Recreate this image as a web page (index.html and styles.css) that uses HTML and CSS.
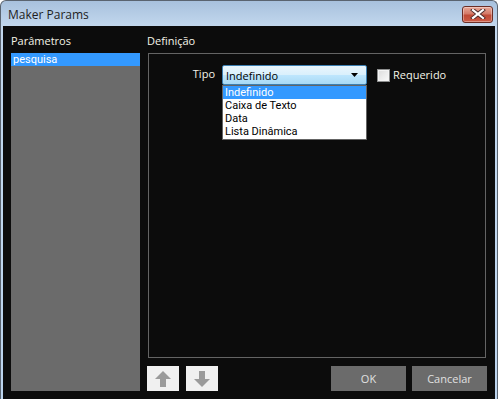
FILE: index.html
```html
<!DOCTYPE html>
<html>
<head>
<meta charset="utf-8">
<link rel="stylesheet" href="styles.css">
</head>
<body>
<div class="window">
  <div class="titlebar">
    <span class="title">Maker Params</span>
    <div class="close">
      <svg width="16" height="10" viewBox="0 0 16 10"><path d="M3 1 L13 9 M13 1 L3 9" stroke="#4a2a2a" stroke-width="4" stroke-linecap="square"/><path d="M3 1 L13 9 M13 1 L3 9" stroke="#fff" stroke-width="2.2" stroke-linecap="square"/></svg>
    </div>
  </div>
  <div class="client">
    <div class="left">
      <div class="label">Parâmetros</div>
      <div class="list">
        <div class="item selected">pesquisa</div>
      </div>
    </div>
    <div class="right">
      <div class="label">Definição</div>
      <div class="group">
        <div class="row">
          <div class="tipo">Tipo</div>
          <div class="combo-wrap">
            <div class="combo">
              <span>Indefinido</span>
              <svg class="arrow" width="7" height="4" viewBox="0 0 7 4"><path d="M0 0 H7 L3.5 4 Z" fill="#000"/></svg>
            </div>
            <div class="dropdown">
              <div class="opt active">Indefinido</div>
              <div class="opt">Caixa de Texto</div>
              <div class="opt">Data</div>
              <div class="opt">Lista Dinâmica</div>
            </div>
          </div>
          <div class="check"></div>
          <div class="req">Requerido</div>
        </div>
      </div>
      <div class="buttons">
        <div class="arrowbtn">
          <svg width="18" height="18" viewBox="0 0 18 18"><path d="M9 1 L17 9 H12 V17 H6 V9 H1 Z" fill="#9a9a9a"/></svg>
        </div>
        <div class="arrowbtn">
          <svg width="18" height="18" viewBox="0 0 18 18"><path d="M9 17 L17 9 H12 V1 H6 V9 H1 Z" fill="#9a9a9a"/></svg>
        </div>
        <div class="spacer"></div>
        <div class="btn">OK</div>
        <div class="btn">Cancelar</div>
      </div>
    </div>
  </div>
</div>
</body>
</html>
```
FILE: styles.css
```css
html, body {
  margin: 0;
  padding: 0;
  background: #ffffff;
}
body {
  font-family: "Open Sans", "Noto Sans", sans-serif;
  font-size: 11px;
}
.window {
  width: 496px;
  height: 398px;
  border: 1px solid #5a6470;
  border-bottom: none;
  border-radius: 6px 6px 0 0;
  background: linear-gradient(#a8c1dd, #c3d8ee 26px, #bcd4ee);
  display: flex;
  flex-direction: column;
  overflow: hidden;
}
.titlebar {
  height: 25px;
  display: flex;
  align-items: center;
  padding: 0 4px 0 7px;
  flex-shrink: 0;
}
.title {
  font-family: "Open Sans", sans-serif;
  font-size: 12px;
  color: #1e1e1e;
  flex: 1;
  padding-top: 1px;
}
.close {
  width: 29px;
  height: 15px;
  margin-top: 1px;
  border: 1px solid #6b2e26;
  border-radius: 3px;
  background: linear-gradient(#e8a898, #d47a68 45%, #c04a36 55%, #cc5c46);
  display: flex;
  align-items: center;
  justify-content: center;
  box-shadow: inset 0 0 0 1px rgba(255,255,255,0.35);
}
.client {
  flex: 1;
  margin: 0 2px 0 2px;
  background: #0c0c0c;
  display: flex;
  gap: 7px;
  padding: 0 8px 0 8px;
}
.label {
  height: 27px;
  box-sizing: border-box;
  padding-top: 7px;
  color: #f4f4e8;
  font-size: 11px;
}
.left {
  width: 129px;
  display: flex;
  flex-direction: column;
}
.list {
  height: 338px;
  background: #6b6b6b;
}
.item {
  height: 13px;
  line-height: 13px;
  padding-left: 2px;
  color: #fff;
  font-family: Roboto, sans-serif;
}
.item.selected {
  background: #3399ff;
}
.right {
  flex: 1;
  display: flex;
  flex-direction: column;
}
.group {
  height: 305px;
  box-sizing: border-box;
  margin-left: 1px;
  width: 338px;
  border: 1px solid #646464;
  padding-top: 11px;
}
.row {
  display: flex;
  align-items: flex-start;
}
.tipo {
  width: 66px;
  text-align: right;
  color: #f4f4e8;
  margin-right: 7px;
  line-height: 18px;
}
.combo-wrap {
  position: relative;
  width: 145px;
}
.combo {
  height: 20px;
  box-sizing: border-box;
  border: 1px solid #3c7fb1;
  border-radius: 2px;
  background: linear-gradient(#eaf6fd, #d9f0fc 50%, #bee6fd 51%, #a7d9f5);
  display: flex;
  align-items: center;
  padding: 0 8px 0 3px;
  color: #000;
}
.combo span {
  flex: 1;
}
.dropdown {
  position: absolute;
  left: 0;
  top: 20px;
  width: 145px;
  box-sizing: border-box;
  border: 1px solid #646464;
  background: #fff;
  padding-bottom: 1px;
}
.opt {
  height: 13px;
  line-height: 13px;
  padding-left: 2px;
  color: #000;
  font-family: Roboto, sans-serif;
  font-size: 11px;
}
.opt.active {
  background: #3399ff;
  color: #fff;
}
.check {
  width: 11px;
  height: 11px;
  margin: 4px 3px 0 10px;
  border: 1px solid #8e8f8f;
  background: linear-gradient(135deg, #dcdcdc, #fafafa);
  box-shadow: inset 0 0 0 1px #f4f4f4;
}
.req {
  color: #f4f4e8;
  line-height: 20px;
}
.buttons {
  margin-top: 8px;
  display: flex;
  gap: 7px;
  height: 25px;
}
.arrowbtn {
  width: 32px;
  height: 25px;
  background: #f0f0f0;
  display: flex;
  align-items: center;
  justify-content: center;
}
.spacer {
  flex: 1;
}
.btn {
  width: 75px;
  height: 25px;
  background: #6b6b6b;
  color: #e0e0e0;
  display: flex;
  align-items: center;
  justify-content: center;
  margin-left: -1px;
}
```
